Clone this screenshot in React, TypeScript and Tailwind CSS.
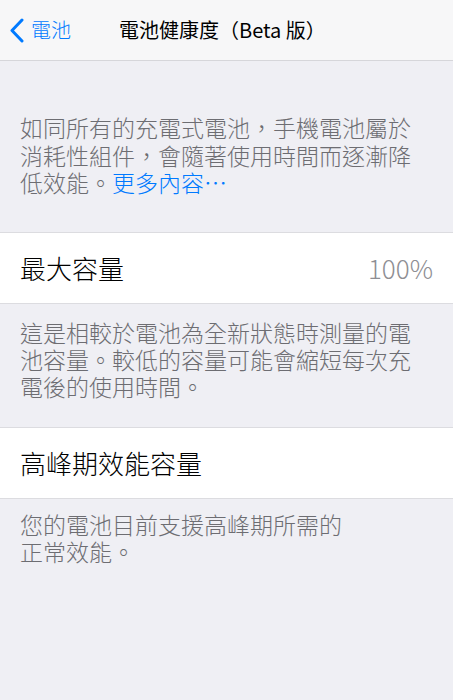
const font = { fontFamily: '"Noto Sans CJK TC", "Noto Sans", sans-serif' };

const Row = ({ label, value }: { label: string; value?: string }) => (
  <div className="flex h-[72px] items-center justify-between border-y border-[#dcdce0] bg-white pl-5 pr-5">
    <span className="text-[26px] font-light text-black">{label}</span>
    {value && <span className="text-[26px] font-light text-[#8e8e93]">{value}</span>}
  </div>
);

export default function App() {
  return (
    <div className="min-h-[700px] w-[453px] bg-[#efeff4]" style={font}>
      <header className="relative flex h-[61px] items-center border-b border-[#d6d6da] bg-[#f7f7f8]">
        <div className="flex items-center pl-[9px] text-[#007aff]">
          <svg width="16" height="25" viewBox="0 0 16 25" className="mr-[6px]">
            <path d="M13 2 L3 12.5 L13 23" fill="none" stroke="#007aff" strokeWidth="3" strokeLinecap="round" strokeLinejoin="round" />
          </svg>
          <span className="text-[20px] font-light">電池</span>
        </div>
        <span className="absolute left-[119px] text-[20px] font-normal text-black">電池健康度（Beta 版）</span>
      </header>

      <p className="px-5 pb-[35px] pt-[53px] text-[23px] font-light leading-[27.5px] text-[#6d6d72]">
        如同所有的充電式電池，手機電池屬於<br />
        消耗性組件，會隨著使用時間而逐漸降<br />
        低效能。<span className="text-[#007aff]">更多內容⋯</span>
      </p>

      <Row label="最大容量" value="100%" />

      <p className="px-5 pb-[27px] pt-[15px] text-[23px] font-light leading-[27px] text-[#6d6d72]">
        這是相較於電池為全新狀態時測量的電<br />
        池容量。較低的容量可能會縮短每次充<br />
        電後的使用時間。
      </p>

      <Row label="高峰期效能容量" />

      <p className="px-5 pt-[12px] text-[23px] font-light leading-[27px] text-[#6d6d72]">
        您的電池目前支援高峰期所需的<br />
        正常效能。
      </p>
    </div>
  );
}
